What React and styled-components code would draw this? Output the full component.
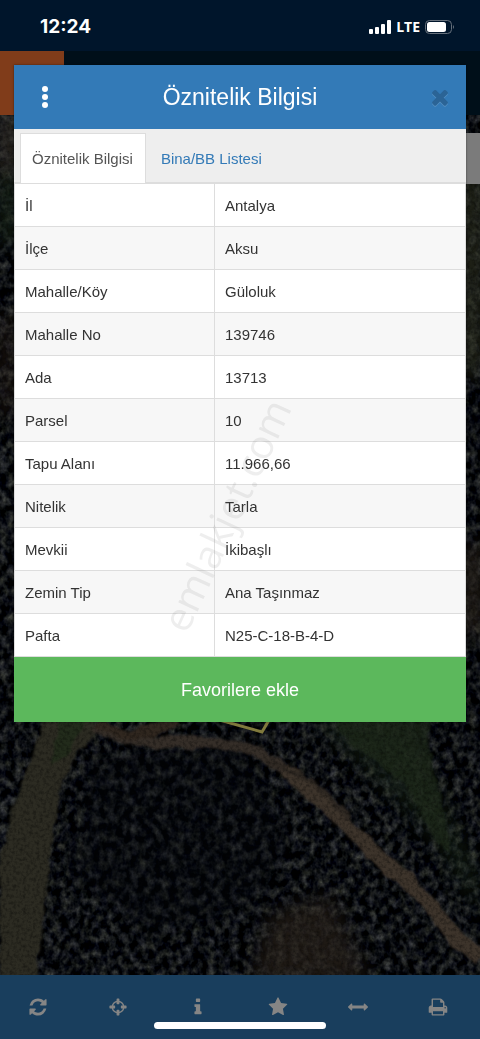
import styled, { createGlobalStyle } from "styled-components";

const icons = {
  refresh: "M1639 1056q0 5-1 7-64 268-268 434.5t-478 166.5q-146 0-282.5-55t-243.5-157l-129 129q-19 19-45 19t-45-19-19-45v-448q0-26 19-45t45-19h448q26 0 45 19t19 45-19 45l-137 137q71 66 161 102t187 36q134 0 250-65t186-179q11-17 53-117 8-23 30-23h192q13 0 22.5 9.5t9.5 22.5zm25-800v448q0 26-19 45t-45 19h-448q-26 0-45-19t-19-45 19-45l138-138q-148-137-349-137-134 0-250 65t-186 179q-11 17-53 117-8 23-30 23h-199q-13 0-22.5-9.5t-9.5-22.5v-7q65-268 270-434.5t480-166.5q146 0 284 55.5t245 156.5l130-129q19-19 45-19t45 19 19 45z",
  crosshairs: "M1325 1024h-109q-26 0-45-19t-19-45v-128q0-26 19-45t45-19h109q-32-108-112.5-188.5t-188.5-112.5v109q0 26-19 45t-45 19h-128q-26 0-45-19t-19-45v-109q-108 32-188.5 112.5t-112.5 188.5h109q26 0 45 19t19 45v128q0 26-19 45t-45 19h-109q32 108 112.5 188.5t188.5 112.5v-109q0-26 19-45t45-19h128q26 0 45 19t19 45v109q108-32 188.5-112.5t112.5-188.5zm339-192v128q0 26-19 45t-45 19h-143q-37 161-154.5 278.5t-278.5 154.5v143q0 26-19 45t-45 19h-128q-26 0-45-19t-19-45v-143q-161-37-278.5-154.5t-154.5-278.5h-143q-26 0-45-19t-19-45v-128q0-26 19-45t45-19h143q37-161 154.5-278.5t278.5-154.5v-143q0-26 19-45t45-19h128q26 0 45 19t19 45v143q161 37 278.5 154.5t154.5 278.5h143q26 0 45 19t19 45z",
  info: "M1216 1344v128q0 26-19 45t-45 19h-512q-26 0-45-19t-19-45v-128q0-26 19-45t45-19h64v-384h-64q-26 0-45-19t-19-45v-128q0-26 19-45t45-19h384q26 0 45 19t19 45v576h64q26 0 45 19t19 45zm-128-1152v192q0 26-19 45t-45 19h-256q-26 0-45-19t-19-45v-192q0-26 19-45t45-19h256q26 0 45 19t19 45z",
  star: "M1728 647q0 22-26 48l-363 354 86 500q1 7 1 20 0 21-10.5 35.5t-30.5 14.5q-19 0-40-12l-449-236-449 236q-22 12-40 12-21 0-31.5-14.5t-10.5-35.5q0-6 2-20l86-500-364-354q-25-27-25-48 0-37 56-46l502-73 225-455q19-41 49-41t49 41l225 455 502 73q56 9 56 46z",
  arrows: "M1792 896q0 26-19 45l-256 256q-19 19-45 19t-45-19-19-45v-128h-1024v128q0 26-19 45t-45 19-45-19l-256-256q-19-19-19-45t19-45l256-256q19-19 45-19t45 19 19 45v128h1024v-128q0-26 19-45t45-19 45 19l256 256q19 19 19 45z",
  print: "M448 1536h896v-256h-896v256zm0-640h896v-384h-160q-40 0-68-28t-28-68v-160h-640v640zm1152 64q0-26-19-45t-45-19-45 19-19 45 19 45 45 19 45-19 19-45zm128 0v416q0 13-9.5 22.5t-22.5 9.5h-224v160q0 40-28 68t-68 28h-960q-40 0-68-28t-28-68v-160h-224q-13 0-22.5-9.5t-9.5-22.5v-416q0-79 56.5-135.5t135.5-56.5h64v-544q0-40 28-68t68-28h672q40 0 88 20t76 48l152 152q28 28 48 76t20 88v256h64q79 0 135.5 56.5t56.5 135.5z",
  times: "M1490 1322q0 40-28 68l-136 136q-28 28-68 28t-68-28l-294-294-294 294q-28 28-68 28t-68-28l-136-136q-28-28-28-68t28-68l294-294-294-294q-28-28-28-68t28-68l136-136q28-28 68-28t68 28l294 294 294-294q28-28 68-28t68 28l136 136q28 28 28 68t-28 68l-294 294 294 294q28 28 28 68z",
};

const tools = [
  { icon: "refresh", label: "Yenile" },
  { icon: "crosshairs", label: "Konum" },
  { icon: "info", label: "Bilgi" },
  { icon: "star", label: "Favoriler" },
  { icon: "arrows", label: "Ölçüm" },
  { icon: "print", label: "Yazdır" },
];

const rows = [
  ["İl", "Antalya"],
  ["İlçe", "Aksu"],
  ["Mahalle/Köy", "Güloluk"],
  ["Mahalle No", "139746"],
  ["Ada", "13713"],
  ["Parsel", "10"],
  ["Tapu Alanı", "11.966,66"],
  ["Nitelik", "Tarla"],
  ["Mevkii", "İkibaşlı"],
  ["Zemin Tip", "Ana Taşınmaz"],
  ["Pafta", "N25-C-18-B-4-D"],
];

function Icon({ name, size = 20 }) {
  return (
    <svg width={size} height={size} viewBox="0 0 1792 1792" fill="currentColor" aria-hidden="true">
      <path d={icons[name]} />
    </svg>
  );
}

function Satellite() {
  return (
    <MapArt viewBox="0 0 480 860" preserveAspectRatio="xMidYMax slice" colorInterpolationFilters="sRGB" aria-hidden="true">
      <defs>
        <filter id="trees" x="0" y="0" width="100%" height="100%">
          <feTurbulence type="fractalNoise" baseFrequency="0.13 0.11" numOctaves="3" seed="8" />
          <feColorMatrix values="0.55 0 0 0 -0.22  0.55 0 0 0 -0.21  0.48 0.08 0 0 -0.2  0 0 0 0 1" />
        </filter>
        <filter id="soil" x="0" y="0" width="100%" height="100%">
          <feTurbulence type="fractalNoise" baseFrequency="0.3" numOctaves="3" seed="3" />
          <feColorMatrix values="0 0 0 0 0  0 0 0 0 0  0 0 0 0 0  1.6 0 0 0 -0.65" />
        </filter>
        <filter id="rough" x="-10%" y="-10%" width="120%" height="120%">
          <feTurbulence type="fractalNoise" baseFrequency="0.06" numOctaves="3" seed="5" />
          <feDisplacementMap in="SourceGraphic" scale="9" xChannelSelector="R" yChannelSelector="G" />
          <feGaussianBlur stdDeviation="0.8" />
        </filter>
        <filter id="soft" x="-30%" y="-30%" width="160%" height="160%">
          <feGaussianBlur stdDeviation="9" />
        </filter>
      </defs>
      <rect width="480" height="860" fill="#0b0f10" />
      <rect width="480" height="860" filter="url(#trees)" />
      <g filter="url(#soft)">
        <path d="M310 600 400 600 480 760 480 800 430 720 350 640z" fill="#1c2a1a" opacity="0.5" />
        <path d="M270 800 330 780 370 870 250 870z" fill="#2b241c" opacity="0.7" />
        <path d="M90 640 240 620 290 720 260 790 150 820 70 760z" fill="#04070c" opacity="0.4" />
        <path d="M0 0h16v60H0z" fill="#35312a" />
        <path d="M0 60h14v70H0z" fill="#1a2719" />
        <path d="M0 200h14v100H0z" fill="#2b211a" opacity="0.7" />
        <path d="M464 60h16v200H464z" fill="#2e3122" />
        <path d="M464 430h16v90H464z" fill="#2b241c" />
      </g>
      <g filter="url(#rough)">
        <path d="M336 606h92c4 20 0 46 12 72l12 64-18-20-30-54-52-36z" fill="#1d2819" opacity="0.75" />
        <path d="M46 600H94l0 20-18 20-12 22-10 50-10 80-8 70H0V740L22 670z" fill="#2c2b22" />
        <path d="M60 600H88L70 640 50 650z" fill="#222b1b" />
        <path d="M94 610 120 623 155 627 215 627 255 636 290 657 330 693" fill="none" stroke="#352e28" strokeWidth="12" />
        <path d="M285 654 330 693 370 734 420 778 455 823 482 842" fill="none" stroke="#3d342b" strokeWidth="15" />
        <path d="M266 645 310 665 350 703" fill="none" stroke="#2e2822" strokeWidth="5" />
        <path d="M96 608 130 622 180 607" fill="none" stroke="#30271f" strokeWidth="10" />
      </g>
      <rect width="480" height="860" filter="url(#soil)" opacity="0.5" />
      <path d="M216 604 262 617 272 600" fill="none" stroke="#817a3d" strokeWidth="3" />
    </MapArt>
  );
}

export default function App() {
  return (
    <>
      <GlobalStyle />
      <Screen>
        <StatusBar>
          <Clock>12:24</Clock>
          <Signals>
            <svg width="22" height="14" viewBox="0 0 22 14" fill="#fff" aria-hidden="true">
              <rect x="0" y="9" width="4" height="5" rx="1" />
              <rect x="6" y="7" width="4" height="7" rx="1" />
              <rect x="12" y="4" width="4" height="10" rx="1" />
              <rect x="18" y="0" width="4" height="14" rx="1" />
            </svg>
            <span>LTE</span>
            <svg width="30" height="14" viewBox="0 0 30 14" aria-hidden="true">
              <rect x="0.5" y="0.5" width="26" height="13" rx="4" fill="none" stroke="#66707c" />
              <rect x="2" y="2" width="19" height="10" rx="2.5" fill="#fff" />
              <path d="M28 5q2 2 0 4z" fill="#66707c" />
            </svg>
          </Signals>
        </StatusBar>
        <AppBar>
          <Brand />
        </AppBar>
        <MapArea>
          <Satellite />
          <MapControl />
        </MapArea>
        <Toolbar>
          {tools.map(({ icon, label }) => (
            <ToolButton key={icon} aria-label={label}>
              <Icon name={icon} />
            </ToolButton>
          ))}
          <HomeIndicator />
        </Toolbar>

        <Modal role="dialog" aria-labelledby="modal-title">
          <ModalHeader>
            <HeaderButton aria-label="Menü">
              <svg width="6" height="22" viewBox="0 0 6 22" fill="#fff" aria-hidden="true">
                <circle cx="3" cy="3" r="3" />
                <circle cx="3" cy="11" r="3" />
                <circle cx="3" cy="19" r="3" />
              </svg>
            </HeaderButton>
            <Title id="modal-title">Öznitelik Bilgisi</Title>
            <HeaderButton $muted aria-label="Kapat">
              <Icon name="times" size={24} />
            </HeaderButton>
          </ModalHeader>
          <Tabs role="tablist">
            <Tab role="tab" aria-selected="true" $active>Öznitelik Bilgisi</Tab>
            <Tab role="tab" aria-selected="false">Bina/BB Listesi</Tab>
          </Tabs>
          <Table>
            <tbody>
              {rows.map(([name, value]) => (
                <tr key={name}>
                  <th scope="row">{name}</th>
                  <td>{value}</td>
                </tr>
              ))}
            </tbody>
          </Table>
          <FavoriteButton>Favorilere ekle</FavoriteButton>
          <Watermark>emlakjet.com</Watermark>
        </Modal>
      </Screen>
    </>
  );
}

const GlobalStyle = createGlobalStyle`
  * {
    box-sizing: border-box;
  }
  body {
    margin: 0;
    background: #00152b;
    font-family: "Liberation Sans", Arial, sans-serif;
  }
  button {
    border: 0;
    padding: 0;
    background: none;
    font-family: inherit;
    cursor: pointer;
  }
  svg {
    display: block;
  }
`
const Screen = styled.div`
  position: relative;
  display: flex;
  flex-direction: column;
  min-height: 100vh;
  overflow: hidden;
`
const StatusBar = styled.header`
  display: flex;
  justify-content: space-between;
  align-items: center;
  height: 51px;
  padding: 2px 25px 0 40px;
  background: #00152b;
  color: #fff;
`
const Clock = styled.span`
  font: 700 19px/24px Inter, sans-serif;
`
const Signals = styled.div`
  display: flex;
  align-items: center;
  gap: 5px;
  font: 700 14px/20px "Open Sans", sans-serif;
`
const AppBar = styled.div`
  height: 64px;
  background: #000f19;
`
const Brand = styled.div`
  width: 64px;
  height: 64px;
  background: #803c1a;
`
const MapArea = styled.main`
  position: relative;
  flex: 1;
  background: #0b0f10;
`
const MapArt = styled.svg`
  position: absolute;
  inset: 0;
  width: 100%;
  height: 100%;
`
const MapControl = styled.div`
  position: absolute;
  top: 18px;
  right: 0;
  width: 20px;
  height: 51px;
  background: #7b7b7b;
`
const Toolbar = styled.nav`
  position: relative;
  display: flex;
  height: 64px;
  background: #193e5d;
`
const ToolButton = styled.button`
  flex: 1;
  display: flex;
  justify-content: center;
  align-items: center;
  padding-right: 4px;
  color: #858585;
`
const HomeIndicator = styled.div`
  position: absolute;
  bottom: 10px;
  left: 50%;
  width: 172px;
  height: 7px;
  border-radius: 4px;
  background: #fff;
  transform: translateX(-50%);
`
const Modal = styled.section`
  position: absolute;
  top: 65px;
  left: 14px;
  right: 14px;
  background: #fff;
  box-shadow: 0 0 2px rgba(0, 0, 0, 0.5);
`
const ModalHeader = styled.div`
  display: flex;
  align-items: center;
  height: 64px;
  background: #337ab7;
`
const HeaderButton = styled.button`
  display: flex;
  justify-content: center;
  align-items: center;
  width: 62px;
  height: 64px;
  padding-left: ${({ $muted }) => ($muted ? `10px` : `0`)};
  color: #2b6496;
  svg {
    filter: ${({ $muted }) => ($muted ? `drop-shadow(0 1px 0 #5590c2)` : `none`)};
  }
`
const Title = styled.h1`
  flex: 1;
  margin: 0;
  color: #fff;
  font-size: 23px;
  font-weight: 400;
  line-height: 32px;
  text-align: center;
`
const Tabs = styled.div`
  display: flex;
  align-items: flex-end;
  height: 54px;
  padding: 4px 6px 0;
  background: #eee;
  box-shadow: inset 0 -1px 0 #ddd;
`
const Tab = styled.button`
  height: 50px;
  padding: 0 12px 0 11px;
  border: 1px solid ${({ $active }) => ($active ? `#ddd` : `transparent`)};
  border-bottom: 0;
  background: ${({ $active }) => ($active ? `#fff` : `transparent`)};
  color: ${({ $active }) => ($active ? `#555` : `#337ab7`)};
  font-size: 15px;
  line-height: 20px;
  & + & {
    margin-left: 3px;
  }
`
const Table = styled.table`
  width: 100%;
  border-collapse: collapse;
  table-layout: fixed;
  color: #333;
  font-size: 15px;
  line-height: 20px;
  th,
  td {
    height: 43px;
    padding: 2px 10px 0;
    border: 1px solid #ddd;
    font-weight: 400;
    text-align: left;
  }
  th {
    width: 200px;
  }
  tr:nth-child(even) {
    background: #f7f7f7;
  }
`
const FavoriteButton = styled.button`
  display: block;
  width: 100%;
  height: 65px;
  background: #5cb85c;
  color: #fff;
  font-size: 18px;
  line-height: 24px;
`
const Watermark = styled.span`
  position: absolute;
  top: 450px;
  left: 47%;
  color: rgba(120, 120, 120, 0.13);
  font: 400 40px/48px "Open Sans", sans-serif;
  transform: translate(-50%, -50%) rotate(-65deg);
  pointer-events: none;
`
